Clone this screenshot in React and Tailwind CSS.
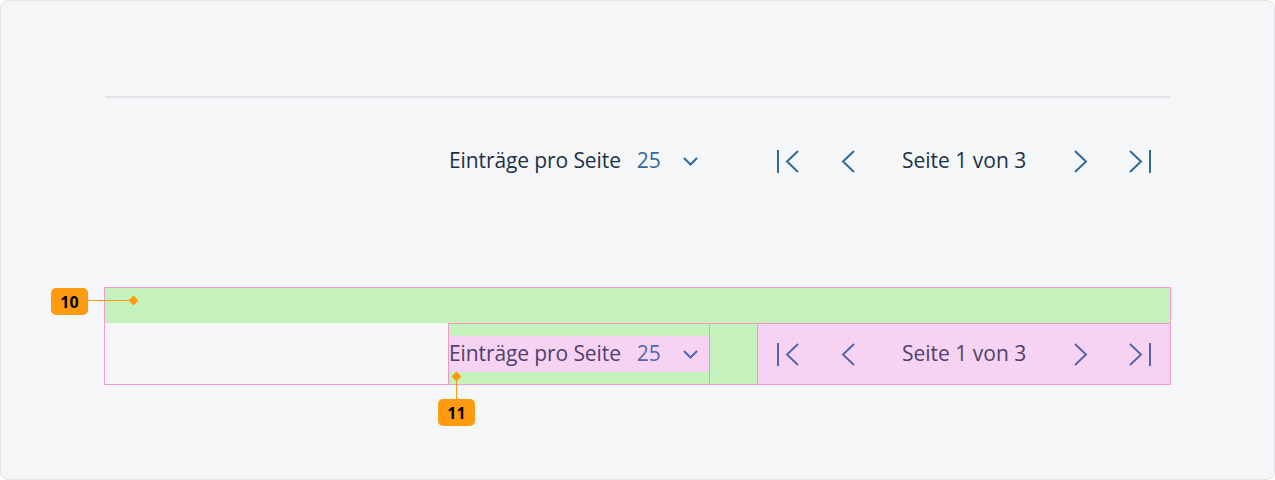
import React from 'react'

const FONT = { fontFamily: '"Open Sans", "Liberation Sans", sans-serif' }

function Chevron({ dir = 'left', className = '' }) {
  const d = dir === 'left' ? 'M13 1 L2 11.5 L13 22' : 'M2 1 L13 11.5 L2 22'
  return (
    <svg width="15" height="23" viewBox="0 0 15 23" className={className}>
      <path d={d} fill="none" stroke="currentColor" strokeWidth="2" />
    </svg>
  )
}

function FirstIcon({ className = '' }) {
  return (
    <svg width="24" height="23" viewBox="0 0 24 23" className={className}>
      <path d="M2 0 L2 23" stroke="currentColor" strokeWidth="2" />
      <path d="M22 1 L11 11.5 L22 22" fill="none" stroke="currentColor" strokeWidth="2" />
    </svg>
  )
}

function LastIcon({ className = '' }) {
  return (
    <svg width="24" height="23" viewBox="0 0 24 23" className={className}>
      <path d="M2 1 L13 11.5 L2 22" fill="none" stroke="currentColor" strokeWidth="2" />
      <path d="M22 0 L22 23" stroke="currentColor" strokeWidth="2" />
    </svg>
  )
}

function ChevronDown({ className = '' }) {
  return (
    <svg width="15" height="9" viewBox="0 0 15 9" className={className}>
      <path d="M1 1 L7.5 7.5 L14 1" fill="none" stroke="currentColor" strokeWidth="2" />
    </svg>
  )
}

function Pager({ annotated }) {
  const text = annotated ? 'text-[#4f3f6e]' : 'text-[#1b3148]'
  const blue = annotated ? 'text-[#5566ad]' : 'text-[#2d6b9d]'
  const pink = annotated ? 'bg-[#f7d3f3]' : ''
  const green = annotated ? 'bg-[#c5f1bc]' : ''
  const edge = annotated ? 'border-[#ec9bc9]' : 'border-transparent'
  return (
    <div className="flex justify-end h-[61px]">
      <div className={`w-[262px] flex items-center border-t border-l border-r ${edge} ${green}`}>
        <div className={`w-full h-[36px] flex items-center ${pink}`}>
          <span className={`text-[21px] tracking-[-0.1px] ${text}`}>Einträge pro Seite</span>
          <span className={`ml-[16px] text-[21px] ${blue}`}>25</span>
          <ChevronDown className={`ml-[22px] ${blue}`} />
        </div>
      </div>
      <div className={`w-[47px] border-t ${edge} ${green}`} />
      <div className={`w-[413px] flex items-center border-t border-l ${edge} ${pink}`}>
        <div className="w-[60px] flex justify-center"><FirstIcon className={blue} /></div>
        <div className="w-[60px] flex justify-center"><Chevron dir="left" className={blue} /></div>
        <div className={`flex-1 pl-[24px] text-[21px] ${text}`}>Seite 1 von 3</div>
        <div className="w-[60px] flex justify-center"><Chevron dir="right" className={blue} /></div>
        <div className="w-[60px] flex justify-center"><LastIcon className={blue} /></div>
      </div>
    </div>
  )
}

function Marker({ label, className }) {
  return (
    <div className={`absolute h-[27px] w-[37px] rounded-[5px] bg-[#ff9b10] flex items-center justify-center text-[16px] font-bold text-black ${className}`}>
      {label}
    </div>
  )
}

export default function App() {
  return (
    <div className="w-[1275px] h-[480px] bg-white" style={FONT}>
      <div className="relative w-full h-full bg-[#f5f6f8] border border-[#e3e5e9] rounded-[8px] overflow-hidden">
        <div className="ml-[104px] w-[1065px]">
          <div className="h-[95px]" />
          <div className="h-[2px] bg-[#dfe1e5]" />
          <div className="h-[32px]" />
          <Pager />
          <div className="h-[96px]" />
        </div>

        <div className="ml-[103px] w-[1067px] border border-[#f29bd0]">
          <div className="h-[35px] bg-[#c5f1bc]" />
          <Pager annotated />
        </div>

        {/* marker 10 */}
        <Marker label="10" className="left-[50px] top-[287px]" />
        <div className="absolute left-[87px] top-[299px] w-[45px] h-px bg-[#ff9b10]" />
        <div className="absolute left-[129px] top-[296px] w-[7px] h-[7px] rotate-45 bg-[#ff9b10]" />

        {/* marker 11 */}
        <Marker label="11" className="left-[437px] top-[398px]" />
        <div className="absolute left-[455px] top-[376px] w-px h-[22px] bg-[#ff9b10]" />
        <div className="absolute left-[452px] top-[372px] w-[7px] h-[7px] rotate-45 bg-[#ff9b10]" />
      </div>
    </div>
  )
}
